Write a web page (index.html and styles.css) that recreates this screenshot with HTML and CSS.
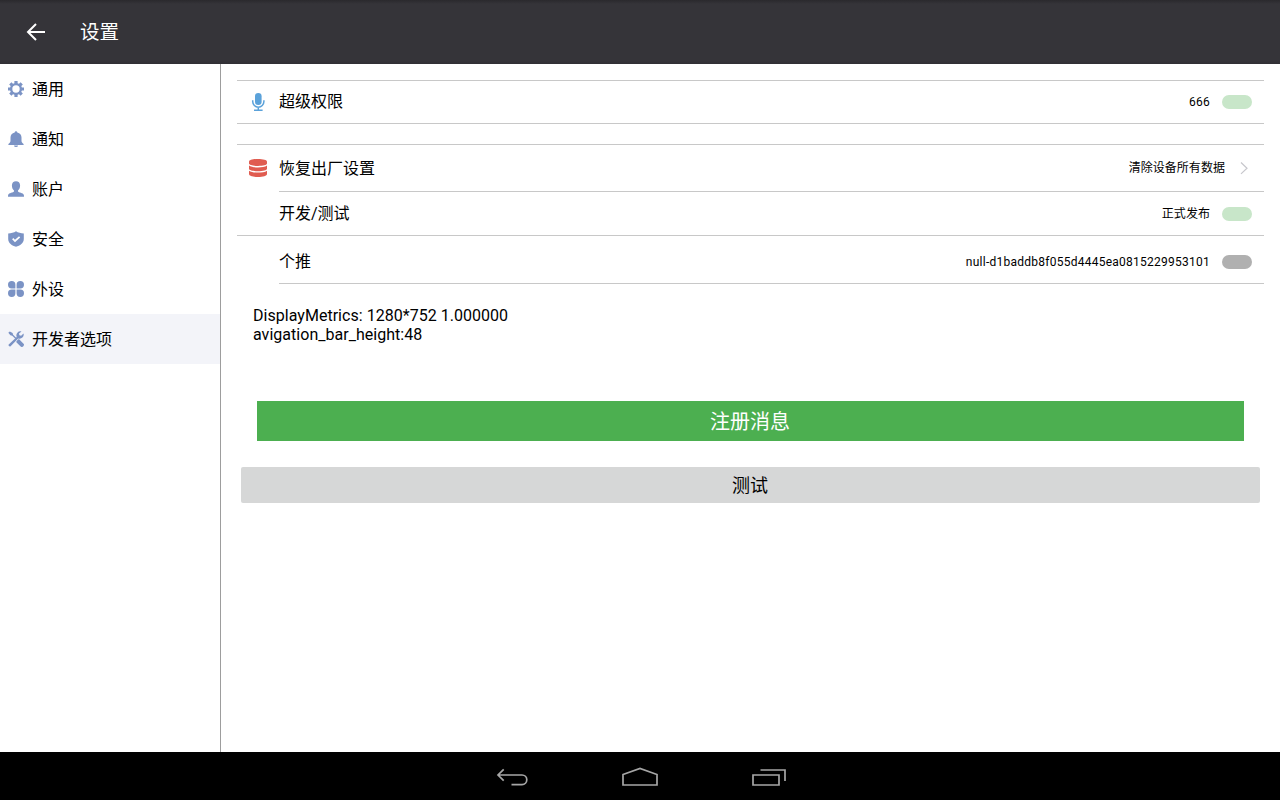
FILE: index.html
```html
<!DOCTYPE html>
<html lang="zh-CN">
<head>
<meta charset="utf-8">
<title>设置</title>
<link rel="stylesheet" href="styles.css">
</head>
<body>
<header class="appbar">
  <svg class="back" width="24" height="24" viewBox="0 0 24 24" fill="none" stroke="#fff" stroke-width="2"><path d="M21 12H4.500M12 4 4 12l8 8"/></svg>
  <h1 class="title">设置</h1>
</header>
<div class="body">
  <nav class="sidebar">
    <a class="item"><svg width="16" height="16" viewBox="0 0 16 16"><g fill="none" stroke="#7b93c5"><circle cx="8" cy="8" r="4.900" stroke-width="2.400"/><g stroke-width="3.200"><path d="M8 0v3M8 13v3M0 8h3M13 8h3M2.300 2.300l2 2M11.700 11.700l2 2M2.300 13.700l2-2M11.700 4.300l2-2"/></g></g></svg><span>通用</span></a>
    <a class="item"><svg width="16" height="16" viewBox="0 0 16 16" fill="#7b93c5"><path d="M6.700 1.500a1.300 1.300 0 0 1 2.600 0C12 2 13.500 4 13.500 6.500v3.200c0 1.300.8 2.300 2.100 3.300v1H.4v-1c1.300-1 2.100-2 2.100-3.300V6.500C2.500 4 4 2 6.700 1.500zM6 14.500h4a2 1.500 0 0 1-4 0z"/></svg><span>通知</span></a>
    <a class="item"><svg width="16" height="16" viewBox="0 0 16 16" fill="#7b93c5"><path d="M8 .2c2.500 0 4.100 1.600 4.100 4.200 0 2-.8 4-2.100 5v1.200c.5 1 5.200 1.400 5.900 3.300l.1 1.900H0l.1-1.900C.8 12 5.500 11.600 6 10.600V9.400c-1.300-1-2.100-3-2.100-5C3.900 1.800 5.500.2 8 .2z"/></svg><span>账户</span></a>
    <a class="item"><svg width="16" height="16" viewBox="0 0 16 16"><path fill="#7b93c5" d="M8 .3C10 1.800 13 2.300 15.800 2.400V8c0 4-3.800 6.700-7.800 7.800C4 14.700.2 12 .2 8V2.400C3 2.300 6 1.800 8 .3z"/><path d="M4.700 7.700 7 10l4.600-4.200" fill="none" stroke="#fff" stroke-width="1.700"/></svg><span>安全</span></a>
    <a class="item"><svg width="16" height="16" viewBox="0 0 16 16" fill="#7b93c5"><path d="M3.700 0a3.700 3.700 0 0 1 3.700 3.700v3.700H3.700a3.700 3.700 0 0 1 0-7.400zM12.300 0a3.700 3.700 0 0 1 0 7.400H8.600V3.700A3.700 3.700 0 0 1 12.300 0zM3.700 8.600h3.700v3.700a3.700 3.700 0 1 1-3.700-3.700zM8.600 8.600h3.700a3.700 3.700 0 1 1-3.700 3.700z"/></svg><span>外设</span></a>
    <a class="item active"><svg width="16" height="16" viewBox="0 0 16 16"><path d="M.3 1.800 1.800.4l2.800 1.700.5 1.700 3.600 3.500-.9.900-3.600-3.500-1.800-.4zM9.300 9.300l1.600-1.200 4.400 4.300a2 2 0 0 1-2.900 2.900L8.100 10.900z" fill="#7b93c5"/><path d="M13.500.5a4 4 0 0 0-4.800 5.400L.7 13.400a1.400 1.400 0 0 0 1.900 1.900l7.600-7.900a4 4 0 0 0 5.300-4.900l-2.400 2.200-1.700-.4-.4-1.700z" fill="#7b93c5"/></svg><span>开发者选项</span></a>
  </nav>
  <main class="content">
    <section class="group">
      <div class="row first">
        <svg class="lead" width="20" height="20" viewBox="0 0 20 20"><rect x="7" y="1" width="6.600" height="12" rx="3.300" fill="#5ba2da"/><path d="M4.700 8.300v1.300a5.600 5.600 0 0 0 11.200 0V8.300M10.300 15v3M6 18.300h8.600" fill="none" stroke="#5ba2da" stroke-width="1.500"/></svg>
        <span class="label">超级权限</span><span class="value">666</span><i class="toggle on"></i>
      </div>
    </section>
    <section class="group second">
      <div class="row reset">
        <svg class="lead" width="20" height="20" viewBox="0 0 20 20"><path fill="#e05c50" d="M1 3.600C1 2 5 1 10 1s9 1 9 2.600v2C19 7 15 8 10 8S1 7 1 5.600z"/><path fill="#e05c50" d="M1 7.500c2 1.400 5.500 1.900 9 1.900s7-.5 9-1.900v3.300c0 1.500-4 2.500-9 2.500s-9-1-9-2.500zM1 12.700c2 1.400 5.500 1.900 9 1.900s7-.5 9-1.900V16c0 2-4 3-9 3s-9-1-9-3z"/></svg>
        <span class="label">恢复出厂设置</span><span class="value">清除设备所有数据</span>
        <svg class="chevron" width="8" height="14" viewBox="0 0 8 14" fill="none" stroke="#c7c7cc" stroke-width="1.200"><path d="m1 1.500 6 5.700-6 5.700"/></svg>
      </div>
      <div class="row release"><span class="label">开发/测试</span><span class="value">正式发布</span><i class="toggle on"></i></div>
      <div class="row push"><span class="label">个推</span><span class="value id">null-d1baddb8f055d4445ea0815229953101</span><i class="toggle"></i></div>
    </section>
    <p class="metrics">DisplayMetrics: 1280*752 1.000000<br>avigation_bar_height:48</p>
    <button class="register">注册消息</button>
    <button class="test">测试</button>
  </main>
</div>
<footer class="navbar">
  <svg width="36" height="24" viewBox="0 0 36 24"><path d="M3 9h24a4.800 4.800 0 0 1 0 9.600H16.500M8.700 3.300 3 9l5.700 5.700"/></svg>
  <svg width="36" height="24" viewBox="0 0 36 24"><path d="M1 8.500 18 2.500l17 6v10.500H1z"/></svg>
  <svg width="36" height="24" viewBox="0 0 36 24"><path d="M2 9h26v10H2zM9.500 4H34v11"/></svg>
</footer>
</body>
</html>
```
FILE: styles.css
```css
* { box-sizing: border-box; }
body {
  margin: 0;
  height: 800px;
  display: flex;
  flex-direction: column;
  overflow: hidden;
  background: #fff;
  color: #000;
  font: 16px/19px Roboto, "Noto Sans CJK SC", sans-serif;
}
svg { display: block; flex: none; }
.appbar {
  height: 64px;
  flex: none;
  display: flex;
  align-items: center;
  gap: 32px;
  padding-left: 24px;
  background: linear-gradient(#2a292d, #353439 4px, #353439 61px, #302f34);
}
.title { margin: 0; padding-top: 2px; color: #fff; font-size: 19.5px; font-weight: 400; line-height: 24px; }
.body { flex: 1; display: flex; }
.sidebar { width: 221px; flex: none; border-right: 1px solid #9d9d9d; }
.item { height: 50px; display: flex; align-items: center; gap: 8px; padding-left: 8px; }
.active { background: #f3f4f9; }
.content { flex: 1; padding: 16px 16px 0; display: flex; flex-direction: column; }
.group { border-top: 1px solid #c8c8c8; }
.second { margin-top: 20px; }
.row { display: flex; align-items: center; padding-right: 12px; border-bottom: 1px solid #c8c8c8; }
.first { height: 43px; }
.first .label { padding-bottom: 2px; }
.lead { margin: 0 11px; }
.label { flex: 1; }
.value { font-size: 12px; letter-spacing: 0.04px; }
.id, .first .value { letter-spacing: 0.25px; }
.toggle { width: 30px; height: 14px; margin-left: 12px; border-radius: 7px; background: #b0b0b0; }
.on { background: #c8e6c9; }
.reset { height: 47px; padding-right: 16px; border-bottom: 0; }
.reset .lead, .reset .chevron { margin-bottom: 2px; }
.chevron { margin-left: 15px; }
.release {
  height: 45px;
  margin-top: -1px;
  padding-left: 42px;
  background: linear-gradient(#c8c8c8, #c8c8c8) 42px 0 / 100% 1px no-repeat;
}
.release .toggle { margin-top: 2px; }
.release .value, .push .value { padding-top: 2px; }
.push { height: 48px; margin-left: 42px; padding-top: 4px; }
.metrics { margin: 22px 16px 0; letter-spacing: 0.03px; }
button { border: 0; padding: 0 1px 2px 0; font-family: inherit; }
.register { height: 40px; margin: 57px 20px 0; background: #4caf50; color: #fff; font-size: 20px; }
.test { height: 36px; margin: 26px 4px 0; border-radius: 2px; background: #d6d7d7; color: #000; font-size: 18px; }
.navbar { height: 48px; flex: none; display: flex; justify-content: center; align-items: center; gap: 92px; padding-top: 3px; background: #000; }
.navbar svg { fill: none; stroke: #a6a6a6; stroke-width: 1.7; }
.navbar svg:first-child, .navbar svg:last-child { margin: 0 -1px 0 1px; }
```
